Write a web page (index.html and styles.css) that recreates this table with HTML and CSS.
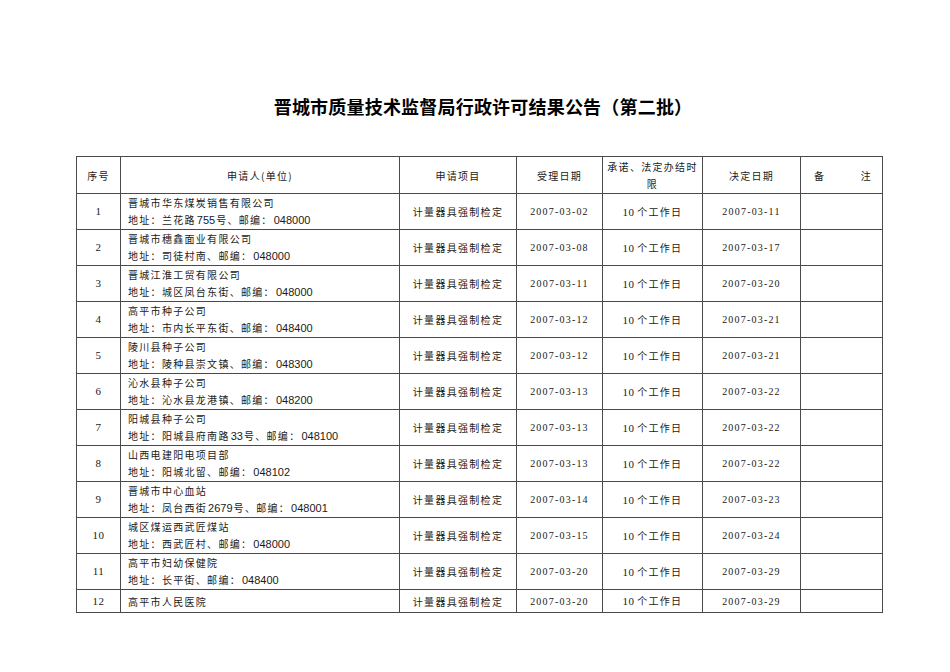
FILE: index.html
```html
<!DOCTYPE html>
<html lang="zh-CN">
<head>
<meta charset="utf-8">
<title>晋城市质量技术监督局行政许可结果公告（第二批）</title>
<link rel="stylesheet" href="styles.css">
</head>
<body>
<div class="page">
  <h1 class="title">晋城市质量技术监督局行政许可结果公告（第二批）</h1>
  <table class="grid">
    <colgroup>
      <col class="c-no"><col class="c-name"><col class="c-item"><col class="c-date"><col class="c-limit"><col class="c-date2"><col class="c-note">
    </colgroup>
    <thead>
      <tr>
        <th>序号</th>
        <th>申请人(单位)</th>
        <th>申请项目</th>
        <th>受理日期</th>
        <th class="limit">承诺、法定办结时限</th>
        <th>决定日期</th>
        <th class="note"><span>备</span><span>注</span></th>
      </tr>
    </thead>
    <tbody>
      <tr><td class="num">1</td><td class="name">晋城市华东煤炭销售有限公司<br>地址：兰花路<span class="lat">755</span>号、邮编：<span class="lat">048000</span></td><td>计量器具强制检定</td><td class="date">2007-03-02</td><td><span class="ser">10</span>个工作日</td><td class="date">2007-03-11</td><td></td></tr>
      <tr><td class="num">2</td><td class="name">晋城市穗鑫面业有限公司<br>地址：司徒村南、邮编：<span class="lat">048000</span></td><td>计量器具强制检定</td><td class="date">2007-03-08</td><td><span class="ser">10</span>个工作日</td><td class="date">2007-03-17</td><td></td></tr>
      <tr><td class="num">3</td><td class="name">晋城江淮工贸有限公司<br>地址：城区凤台东街、邮编：<span class="lat">048000</span></td><td>计量器具强制检定</td><td class="date">2007-03-11</td><td><span class="ser">10</span>个工作日</td><td class="date">2007-03-20</td><td></td></tr>
      <tr><td class="num">4</td><td class="name">高平市种子公司<br>地址：市内长平东街、邮编：<span class="lat">048400</span></td><td>计量器具强制检定</td><td class="date">2007-03-12</td><td><span class="ser">10</span>个工作日</td><td class="date">2007-03-21</td><td></td></tr>
      <tr><td class="num">5</td><td class="name">陵川县种子公司<br>地址：陵种县崇文镇、邮编：<span class="lat">048300</span></td><td>计量器具强制检定</td><td class="date">2007-03-12</td><td><span class="ser">10</span>个工作日</td><td class="date">2007-03-21</td><td></td></tr>
      <tr><td class="num">6</td><td class="name">沁水县种子公司<br>地址：沁水县龙港镇、邮编：<span class="lat">048200</span></td><td>计量器具强制检定</td><td class="date">2007-03-13</td><td><span class="ser">10</span>个工作日</td><td class="date">2007-03-22</td><td></td></tr>
      <tr><td class="num">7</td><td class="name">阳城县种子公司<br>地址：阳城县府南路<span class="lat">33</span>号、邮编：<span class="lat">048100</span></td><td>计量器具强制检定</td><td class="date">2007-03-13</td><td><span class="ser">10</span>个工作日</td><td class="date">2007-03-22</td><td></td></tr>
      <tr><td class="num">8</td><td class="name">山西电建阳电项目部<br>地址：阳城北留、邮编：<span class="lat">048102</span></td><td>计量器具强制检定</td><td class="date">2007-03-13</td><td><span class="ser">10</span>个工作日</td><td class="date">2007-03-22</td><td></td></tr>
      <tr><td class="num">9</td><td class="name">晋城市中心血站<br>地址：凤台西街<span class="lat">2679</span>号、邮编：<span class="lat">048001</span></td><td>计量器具强制检定</td><td class="date">2007-03-14</td><td><span class="ser">10</span>个工作日</td><td class="date">2007-03-23</td><td></td></tr>
      <tr><td class="num">10</td><td class="name">城区煤运西武匠煤站<br>地址：西武匠村、邮编：<span class="lat">048000</span></td><td>计量器具强制检定</td><td class="date">2007-03-15</td><td><span class="ser">10</span>个工作日</td><td class="date">2007-03-24</td><td></td></tr>
      <tr><td class="num">11</td><td class="name">高平市妇幼保健院<br>地址：长平街、邮编：<span class="lat">048400</span></td><td>计量器具强制检定</td><td class="date">2007-03-20</td><td><span class="ser">10</span>个工作日</td><td class="date">2007-03-29</td><td></td></tr>
      <tr class="short"><td class="num">12</td><td class="name">高平市人民医院</td><td>计量器具强制检定</td><td class="date">2007-03-20</td><td><span class="ser">10</span>个工作日</td><td class="date">2007-03-29</td><td></td></tr>
    </tbody>
  </table>
</div>
</body>
</html>
```

FILE: styles.css
```css
html, body {
  margin: 0;
  padding: 0;
  background: #ffffff;
}

body {
  font-family: "Noto Sans CJK SC", "Liberation Serif", serif;
  color: #1a1a1a;
}

.page {
  padding: 94px 0 0 76px;
  width: 806px;
}

.title {
  margin: 0 0 37px 0;
  padding-left: 8px;
  text-align: center;
  font-family: "Noto Sans CJK SC", sans-serif;
  font-weight: 700;
  font-size: 18px;
  line-height: 25px;
  letter-spacing: 0.2px;
  color: #000000;
}

.grid {
  border-collapse: collapse;
  table-layout: fixed;
  width: 806px;
  font-size: 10px;
  letter-spacing: 1.3px;
}

.c-no { width: 44px; }
.c-name { width: 279px; }
.c-item { width: 117px; }
.c-date { width: 86px; }
.c-limit { width: 100px; }
.c-date2 { width: 98px; }
.c-note { width: 82px; }

.grid th,
.grid td {
  border: 1px solid #4a4a4a;
  padding: 0;
  text-align: center;
  vertical-align: middle;
  font-weight: 400;
  line-height: 17px;
}

.grid thead tr {
  height: 37px;
}

.grid tbody tr {
  height: 36px;
}

.grid tbody tr.short {
  height: 23px;
}

.grid th.limit {
  padding: 0 3px;
  line-height: 17px;
}

.grid th.note {
  padding: 0 10px 0 13px;
  text-align: justify;
  text-align-last: justify;
}

.grid td.name {
  text-align: left;
  padding-left: 7px;
  line-height: 17px;
}

.grid td.num {
  font-family: "Liberation Serif", serif;
  font-size: 11px;
  letter-spacing: 0.5px;
}

.grid td.date {
  font-family: "Liberation Serif", serif;
  font-size: 10px;
  letter-spacing: 1.2px;
}

.lat {
  font-family: "Liberation Sans", sans-serif;
  font-size: 11px;
  letter-spacing: 0;
  padding: 0 1px;
}

.ser {
  font-family: "Liberation Serif", serif;
  font-size: 11px;
  letter-spacing: 0.3px;
  margin-right: 3px;
}
```
